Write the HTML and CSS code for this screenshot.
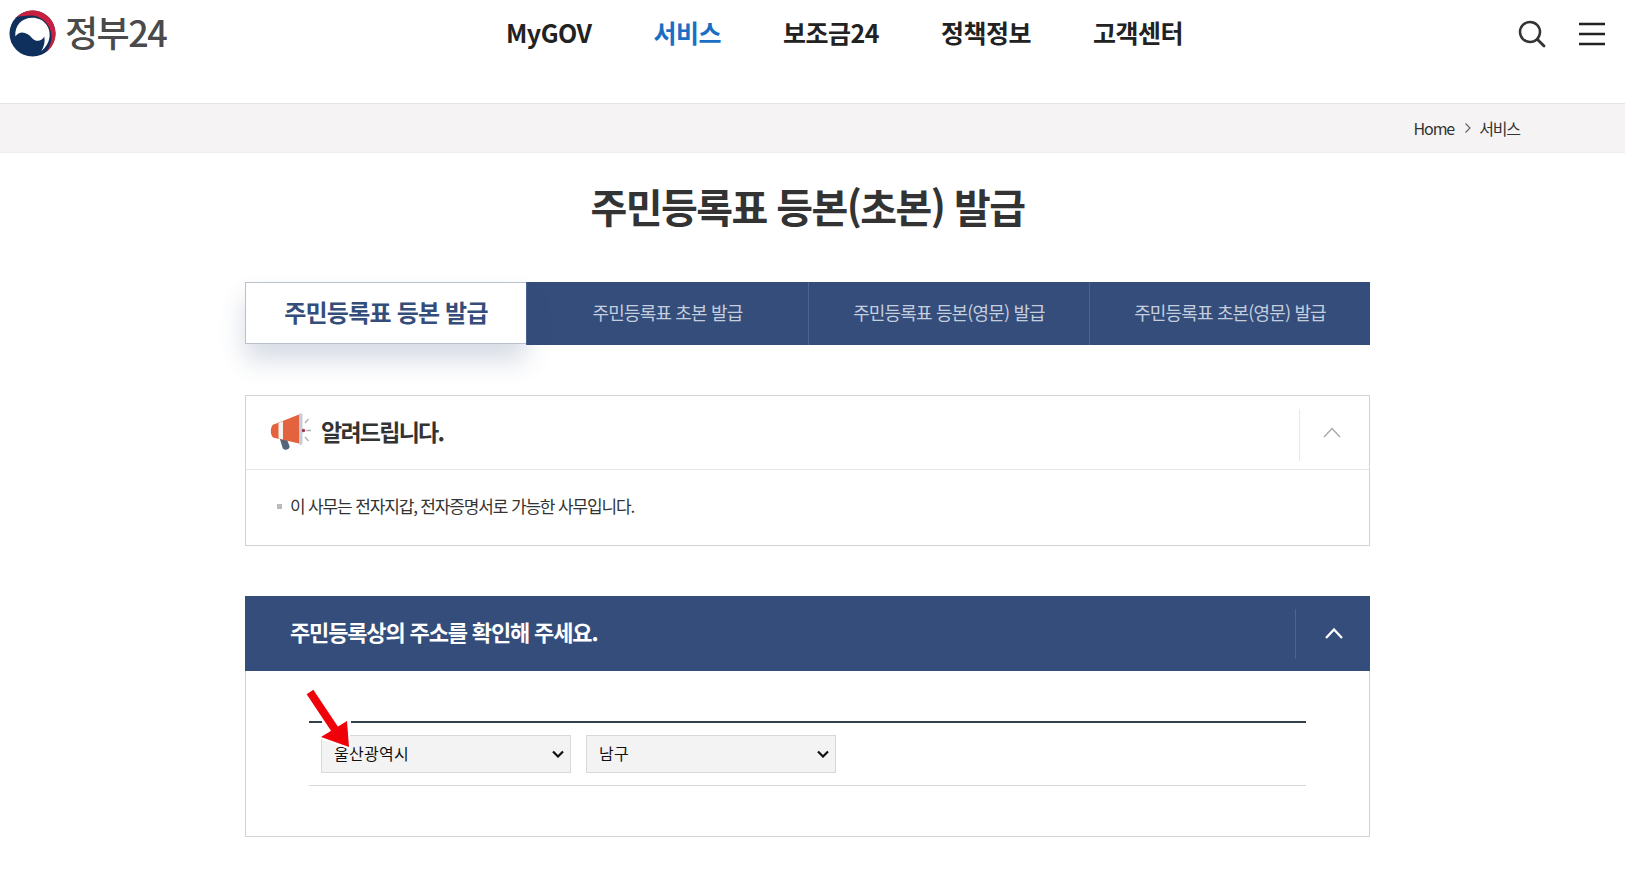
FILE: index.html
```html
<!DOCTYPE html>
<html lang="ko">
<head>
<meta charset="utf-8">
<title>주민등록표 등본(초본) 발급</title>
<link rel="stylesheet" href="styles.css">
</head>
<body>
<header class="top">
  <a class="logo">
    <svg class="logo-mark" viewBox="0 0 48 48" width="47" height="47">
      <circle cx="24" cy="24" r="23.500" fill="#0f2f5c"/>
      <path d="M8 7C13 2.500 19 .5 24 .5c13 0 23.500 10.500 23.500 23.500 0 8-4 15-10 19.500 4-5 6-11 6-16C43.500 16 34 5.500 22 5.500 17 5.500 12 6.500 8 7z" fill="#c8203f"/>
      <path d="M6.500 27C5.500 16 13 8 24 8c11 0 18.500 9 17.500 19-.7 6-3.500 11-8.500 15 3-5 4-10 3-15-3 5.500-9 6-13 1-4-5-12-8-16.500-1z" fill="#fff"/>
    </svg>
    <span class="logo-text">정부24</span>
  </a>
  <nav class="gnb">
    <a>MyGOV</a>
    <a class="on">서비스</a>
    <a>보조금24</a>
    <a>정책정보</a>
    <a>고객센터</a>
  </nav>
  <div class="top-icons">
    <svg viewBox="0 0 28 28" width="28" height="28"><circle cx="12" cy="12" r="10" fill="none" stroke="#333" stroke-width="2.500"/><path d="M19.500 19.500l6.500 6.500" stroke="#333" stroke-width="2.800" stroke-linecap="round"/></svg>
    <svg viewBox="0 0 26 24" width="26" height="24"><path d="M0 2h26M0 12h26M0 22h26" stroke="#222" stroke-width="2.500"/></svg>
  </div>
</header>
<div class="crumbs">
  <span class="home">Home</span>
  <svg class="crumb-sep" viewBox="0 0 8 12" width="8" height="12"><path d="M1.500 1.500L6 6l-4.500 4.500" fill="none" stroke="#666" stroke-width="1.200"/></svg>
  <span class="here">서비스</span>
</div>
<main class="wrap">
  <h1 class="title">주민등록표 등본(초본) 발급</h1>
  <div class="tabs">
    <a class="tab active">주민등록표 등본 발급</a>
    <a class="tab">주민등록표 초본 발급</a>
    <a class="tab">주민등록표 등본(영문) 발급</a>
    <a class="tab">주민등록표 초본(영문) 발급</a>
  </div>
  <section class="notice">
    <div class="notice-head">
      <svg class="horn" viewBox="0 0 50 46" width="50" height="46">
        <path d="M13 26l7 1 3.500 9c1 3.500-6 5.500-7 1.500z" fill="#55657a"/>
        <path d="M9 14L33 4.500v29L9 28c-5.500 0-5.500-14 0-14z" fill="#e4633f"/>
        <path d="M12.500 13l4.500-1.800v18.300l-4.500-1z" fill="#f4f1ef"/>
        <path d="M33 5c0-2.500 3.500-2.500 3.500 0v28c0 2.500-3.500 2.500-3.500 0z" fill="#c9cbd6"/>
        <circle cx="37.500" cy="20.500" r="1.700" fill="#a5334a"/>
        <path d="M39 13l3.500-4M40.500 20.500h4.500M39 27l3.500 4" stroke="#aab0b5" stroke-width="1.300"/>
      </svg>
      <h2 class="notice-title">알려드립니다.</h2>
      <div class="toggle dark-line">
        <svg viewBox="0 0 18 11" width="18" height="11"><path d="M1 10l8-8.500 8 8.500" fill="none" stroke="#aaa" stroke-width="1.500"/></svg>
      </div>
    </div>
    <div class="notice-body">
      <p class="note">이 사무는 전자지갑, 전자증명서로 가능한 사무입니다.</p>
    </div>
  </section>
  <section class="panel">
    <div class="panel-head">
      <h2 class="panel-title">주민등록상의 주소를 확인해 주세요.</h2>
      <div class="toggle light">
        <svg viewBox="0 0 18 11" width="18" height="11"><path d="M1 10l8-8.500 8 8.500" fill="none" stroke="#fff" stroke-width="2.300"/></svg>
      </div>
    </div>
    <div class="panel-body">
      <div class="form-row">
        <select class="sel"><option>울산광역시</option></select>
        <select class="sel"><option>남구</option></select>
        <svg class="arrow" viewBox="0 0 50 62" width="50" height="62">
          <path d="M16 31h29v8H16z" fill="#fff"/>
          <path d="M4 3l27 41" stroke="#fff" stroke-width="12"/>
          <path d="M41 32l2 26-28-10z" fill="#fff" stroke="#fff" stroke-width="4"/>
          <path d="M4 3l26 39" stroke="#f00008" stroke-width="8"/>
          <path d="M41 32l2 26-28-10z" fill="#f00008"/>
        </svg>
      </div>
    </div>
  </section>
</main>
</body>
</html>
```
FILE: styles.css
```css
* { box-sizing: border-box; }
html, body { margin: 0; padding: 0; }
body {
  background: #fff;
  color: #333;
  font-family: "Noto Sans CJK KR", "Noto Sans", sans-serif;
  height: 873px;
  overflow: hidden;
}
svg { display: block; }
.top {
  height: 103px;
  display: flex;
  align-items: flex-start;
  padding: 10px 16px 0 9px;
  position: relative;
}
.logo { display: flex; align-items: center; gap: 9px; width: 180px; height: 47px; }
.logo-mark { width: 47px; height: 47px; flex: none; }
.logo-text {
  font-family: "Noto Sans CJK KR", sans-serif;
  font-size: 36px;
  font-weight: 500;
  color: #4a4a4a;
  letter-spacing: -1.5px;
  line-height: 43px;
  padding-bottom: 4px;
}
.gnb {
  display: flex;
  gap: 62px;
  margin-left: 317px;
  height: 43px;
  align-items: center;
  font-size: 25px;
  font-weight: 700;
  color: #222;
  letter-spacing: -0.5px;
}
.gnb .on { color: #1a6fc4; }
.top-icons {
  margin-left: auto;
  display: flex;
  gap: 33px;
  align-items: center;
  height: 47px;
  padding-right: 4px;
}
.crumbs {
  height: 50px;
  background: #f5f3f4;
  border-top: 1px solid #e4e4e4;
  border-bottom: 1px solid #eee;
  display: flex;
  align-items: center;
  justify-content: flex-end;
  gap: 9px;
  padding-right: 105px;
  font-size: 16px;
  letter-spacing: -1.1px;
  color: #333;
}
.crumb-sep { margin: 0 -2px 0 1px; }
.wrap { width: 1125px; margin-left: 245px; }
.title {
  margin: 0;
  height: 129px;
  padding-top: 22px;
  text-align: center;
  font-size: 40px;
  line-height: 62px;
  font-weight: 700;
  letter-spacing: -1.55px;
  color: #333;
}
.tabs { display: grid; grid-template-columns: 281px 282px 281px 281px; height: 63px; align-items: start; }
.tab {
  background: #344d7a;
  color: #c5cede;
  display: flex;
  align-items: center;
  justify-content: center;
  height: 63px;
  padding-bottom: 4px;
  font-size: 18px;
  letter-spacing: -0.85px;
  border-left: 1px solid #4d648d;
}
.tab.active {
  background: #fff;
  color: #344d7a;
  font-size: 24px;
  font-weight: 700;
  letter-spacing: -0.8px;
  height: 62px;
  border: 1px solid #b9c0cc;
  border-right: 0;
  box-shadow: 0 16px 26px rgba(52, 77, 122, .2);
  position: relative;
}
.notice {
  margin-top: 50px;
  height: 151px;
  border: 1px solid #d2d2d2;
  background: #fff;
  position: relative;
}
.notice-head {
  height: 74px;
  border-bottom: 1px solid #e6e6e6;
  display: flex;
  align-items: center;
  padding-left: 20px;
}
.horn { flex: none; width: 50px; height: 46px; }
.notice-title {
  margin: 0 0 4px 5px;
  font-size: 23px;
  font-weight: 700;
  letter-spacing: -1.75px;
  color: #333;
}
.toggle {
  margin-left: auto;
  width: 70px;
  height: 52px;
  border-left: 1px solid #e8e8e8;
  display: flex;
  align-items: center;
  justify-content: center;
}
.toggle.dark-line { margin-top: 4px; padding: 0 5px 4px 0; }
.toggle.light { width: 75px; height: 50px; border-left-color: #4d648d; padding-left: 2px; }
.notice-body { padding: 22px 31px; }
.note {
  margin: 0;
  font-size: 17px;
  line-height: 27px;
  letter-spacing: -1.15px;
  padding-left: 13px;
  color: #333;
  position: relative;
}
.note::before {
  content: "";
  position: absolute;
  left: 0;
  top: 12px;
  width: 5px;
  height: 5px;
  background: #bbb;
}
.panel { margin-top: 50px; height: 241px; border: 1px solid #d2d2d2; border-top: 0; }
.panel-head {
  height: 75px;
  margin: 0 -1px;
  background: #344d7a;
  display: flex;
  align-items: center;
  padding-left: 45px;
}
.panel-title {
  margin: 0 0 5px;
  color: #fff;
  font-size: 22px;
  font-weight: 700;
  letter-spacing: -1.15px;
}
.panel-body { padding: 50px 63px 0; }
.form-row {
  position: relative;
  border-top: 2px solid #333f4d;
  border-bottom: 1px solid #d8d8d8;
  height: 65px;
  padding: 12px 12px 0;
  display: flex;
  gap: 15px;
  align-items: flex-start;
}
.sel {
  appearance: none;
  -webkit-appearance: none;
  width: 250px;
  height: 38px;
  background-color: #f3f3f3;
  background-image: url("data:image/svg+xml,%3Csvg xmlns='http://www.w3.org/2000/svg' width='12' height='8' viewBox='0 0 12 8'%3E%3Cpath d='M1 1.500l5 5 5-5' fill='none' stroke='%23111' stroke-width='2.200'/%3E%3C/svg%3E");
  background-repeat: no-repeat;
  background-position: right 6px center;
  border: 1px solid #d8d8d8;
  border-radius: 0;
  padding: 0 12px 2px;
  font-family: "Noto Sans CJK KR", sans-serif;
  font-size: 16px;
  letter-spacing: .3px;
  color: #111;
}
.arrow { position: absolute; left: -3px; top: -34px; }
```
